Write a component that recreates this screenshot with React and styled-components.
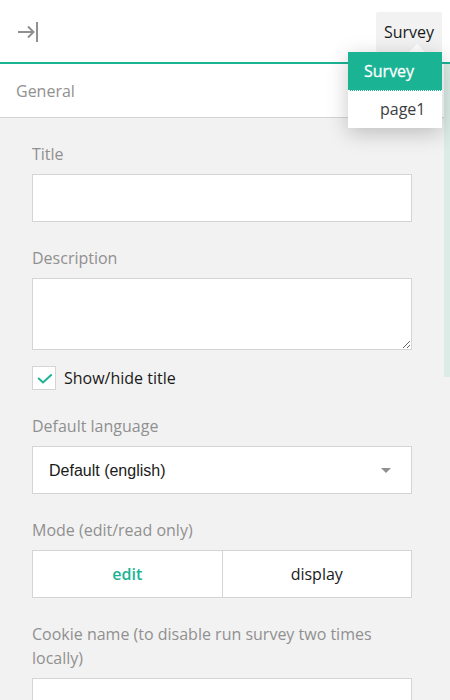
import React from "react";
import styled, { createGlobalStyle } from "styled-components";

const GlobalStyle = createGlobalStyle`
  *, *::before, *::after { box-sizing: border-box; }
  body {
    margin: 0;
    overflow: hidden;
    background: #f2f2f2;
    color: #1a1a1a;
    font: 16px/24px "Open Sans", sans-serif;
  }
`;

const Panel = styled.div`
  width: 450px;
  height: 700px;
  overflow: hidden;
  background: #f2f2f2;
`;

const Header = styled.header`
  display: flex;
  align-items: flex-start;
  justify-content: space-between;
  height: 64px;
  padding: 12px 8px 0 16px;
  background: #fff;
  border-bottom: 2px solid #1ab394;
`;

const CollapseButton = styled.button`
  display: flex;
  align-items: center;
  height: 40px;
  padding: 0;
  border: 0;
  background: none;
`;

const Selector = styled.div`
  position: relative;
  width: 66px;
`;

const SelectorButton = styled.button`
  display: block;
  position: relative;
  width: 66px;
  height: 40px;
  padding: 0;
  border: 0;
  border-radius: 2px;
  background: #f2f2f2;
  color: #1a1a1a;
  font: inherit;

  &::after {
    content: "";
    position: absolute;
    left: 33px;
    bottom: 0;
    border: 8px solid transparent;
    border-top: 0;
    border-bottom-color: #fff;
  }
`;

const Menu = styled.ul`
  position: absolute;
  top: 40px;
  right: 0;
  z-index: 2;
  width: 94px;
  margin: 0;
  padding: 0;
  list-style: none;
  background: #fff;
  box-shadow: 0 5px 20px rgba(0, 0, 0, 0.22);
`;

const MenuItem = styled.li`
  height: ${(p) => (p.$active ? 39 : 37)}px;
  padding: ${(p) => (p.$active ? "7px 0 0 16px" : "6px 0 0 32px")};
  background: ${(p) => (p.$active ? "#1ab394" : "#fff")};
  border-bottom: ${(p) => (p.$active ? "1px dotted #fff" : "0")};
  color: ${(p) => (p.$active ? "#fff" : "#3d3d3d")};
  -webkit-text-stroke: ${(p) => (p.$active ? "0.3px #fff" : "0")};
`;

const Body = styled.div`
  display: flex;
  align-items: flex-start;
`;

const Content = styled.main`
  width: 444px;
`;

const SectionTitle = styled.h2`
  height: 54px;
  margin: 0;
  padding: 15px 16px;
  background: #fff;
  border-bottom: 1px solid #d4d4d4;
  color: #909090;
  font-size: 16px;
  font-weight: 400;
`;

const ScrollThumb = styled.div`
  width: 6px;
  height: 313px;
  background: #dbece7;
`;

const Form = styled.form`
  display: flex;
  flex-direction: column;
  gap: 24px;
  padding: 24px 32px;
`;

const Field = styled.div`
  display: flex;
  flex-direction: column;
  gap: 8px;
`;

const Label = styled.label`
  color: #909090;
`;

const Input = styled.input`
  width: 100%;
  height: 48px;
  padding: 0 16px;
  border: 1px solid #d4d4d4;
  border-radius: 0;
  background: #fff;
  font: inherit;
`;

const TextArea = styled.textarea`
  display: block;
  width: 100%;
  height: 72px;
  padding: 8px 16px;
  border: 1px solid #d4d4d4;
  border-radius: 0;
  background: #fff;
  font: inherit;
  resize: vertical;
`;

const CheckRow = styled.div`
  display: flex;
  align-items: center;
  gap: 8px;
  height: 24px;
  margin-top: -8px;
`;

const CheckBox = styled.span`
  width: 24px;
  height: 24px;
  border: 1px solid #d4d4d4;
  background: #fff;

  svg { display: block; }
`;

const SelectBox = styled.div`
  display: flex;
  align-items: center;
  justify-content: space-between;
  height: 48px;
  padding: 0 20px 0 16px;
  border: 1px solid #d4d4d4;
  background: #fff;
  font-family: "Liberation Sans", Arial, sans-serif;
`;

const SelectValue = styled.span`
  padding-top: 2px;
`;

const ButtonGroup = styled.div`
  display: flex;
  height: 48px;
  border: 1px solid #d4d4d4;
  background: #fff;
`;

const GroupButton = styled.button`
  flex: 1;
  padding: 0;
  border: 0;
  background: #fff;
  color: ${(p) => (p.$active ? "#1ab394" : "#1a1a1a")};
  font: inherit;
  font-weight: ${(p) => (p.$active ? 600 : 400)};

  & + & { border-left: 1px solid #d4d4d4; }
`;

export default function App() {
  return (
    <Panel>
      <GlobalStyle />
      <Header>
        <CollapseButton type="button" aria-label="Collapse panel">
          <svg width="24" height="24" viewBox="0 0 24 24" fill="none" stroke="#909090" strokeWidth="2">
            <path d="M2 12h15M12 6.5l5.5 5.5-5.5 5.5M21 2v20" />
          </svg>
        </CollapseButton>
        <Selector>
          <SelectorButton type="button">Survey</SelectorButton>
          <Menu>
            <MenuItem $active>Survey</MenuItem>
            <MenuItem>page1</MenuItem>
          </Menu>
        </Selector>
      </Header>
      <Body>
        <Content>
          <SectionTitle>General</SectionTitle>
          <Form>
            <Field>
              <Label htmlFor="title">Title</Label>
              <Input id="title" />
            </Field>
            <Field>
              <Label htmlFor="description">Description</Label>
              <TextArea id="description" />
            </Field>
            <CheckRow>
              <CheckBox role="checkbox" aria-checked="true" aria-label="Show/hide title">
                <svg width="22" height="22" viewBox="0 0 22 22" fill="none" stroke="#1ab394" strokeWidth="2">
                  <path d="M5.2 11l4.8 4.5 8.7-8" />
                </svg>
              </CheckBox>
              <span>Show/hide title</span>
            </CheckRow>
            <Field>
              <Label>Default language</Label>
              <SelectBox>
                <SelectValue>Default (english)</SelectValue>
                <svg width="10" height="5" viewBox="0 0 10 5" fill="#909090">
                  <path d="M0 0h10L5 5z" />
                </svg>
              </SelectBox>
            </Field>
            <Field>
              <Label>Mode (edit/read only)</Label>
              <ButtonGroup>
                <GroupButton type="button" $active>edit</GroupButton>
                <GroupButton type="button">display</GroupButton>
              </ButtonGroup>
            </Field>
            <Field>
              <Label htmlFor="cookie">Cookie name (to disable run survey two times locally)</Label>
              <Input id="cookie" />
            </Field>
          </Form>
        </Content>
        <ScrollThumb />
      </Body>
    </Panel>
  );
}
